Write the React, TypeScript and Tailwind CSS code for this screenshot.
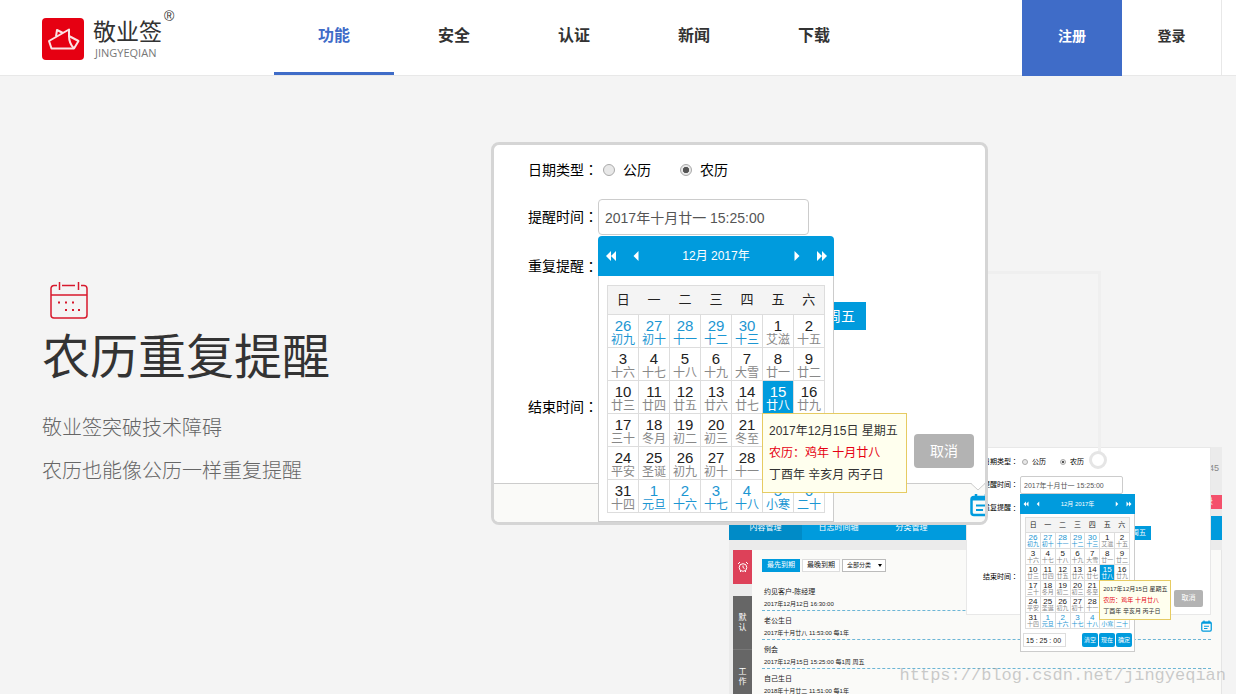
import { useId } from "react";
import clsx from "clsx";

type Size = "full" | "mini";

const weekdays = ["日", "一", "二", "三", "四", "五", "六"];

const weeks: [number, string][][] = [
  [[26, "初九"], [27, "初十"], [28, "十一"], [29, "十二"], [30, "十三"], [1, "艾滋"], [2, "十五"]],
  [[3, "十六"], [4, "十七"], [5, "十八"], [6, "十九"], [7, "大雪"], [8, "廿一"], [9, "廿二"]],
  [[10, "廿三"], [11, "廿四"], [12, "廿五"], [13, "廿六"], [14, "廿七"], [15, "廿八"], [16, "廿九"]],
  [[17, "三十"], [18, "冬月"], [19, "初二"], [20, "初三"], [21, "冬至"], [22, "初五"], [23, "初六"]],
  [[24, "平安"], [25, "圣诞"], [26, "初九"], [27, "初十"], [28, "十一"], [29, "十二"], [30, "十三"]],
  [[31, "十四"], [1, "元旦"], [2, "十六"], [3, "十七"], [4, "十八"], [5, "小寒"], [6, "二十"]],
];

const navItems = ["功能", "安全", "认证", "新闻", "下载"];

const reminders = [
  ["约见客户-陈经理", "2017年12月12日 16:30:00"],
  ["老公生日", "2017年十月廿八 11:53:00 每1年"],
  ["例会", "2017年12月15日 15:25:00 每1周 周五"],
  ["自己生日", "2018年十月廿二 11:51:00 每1年"],
];

const calendarStyles = {
  full: {
    box: "mt-px w-[236px]",
    head: "h-10 text-xs rounded-t-sm",
    arrow: "w-[25px]",
    icon: "size-3",
    body: "px-2 pt-[9px] pb-2",
    th: "h-[29px] w-[31px] text-[13px]",
    td: "h-[33px] w-[31px] pt-1",
    day: "text-[15px] leading-[14px]",
    lunar: "text-xs leading-[14px]",
    tip: "w-[145px] h-20 px-1.5 py-1.5 text-xs leading-[22px]",
  },
  mini: {
    box: "w-[115px]",
    head: "h-5 text-[6px]",
    arrow: "w-3",
    icon: "size-1.5",
    body: "px-1 pt-[3px] pb-1",
    th: "h-[15px] w-[15px] text-[7px]",
    td: "h-4 w-[15px] pt-px",
    day: "text-[8px] leading-[7px]",
    lunar: "text-[6px] leading-[7px]",
    tip: "w-[72px] h-10 px-[3px] py-[3px] text-[6px] leading-[11px]",
  },
};

const formStyles = {
  full: {
    text: "text-sm",
    row1: "h-[50px] pl-[34px]",
    row2: "mt-1 h-9 pl-[34px]",
    row3: "h-[62px] pl-[34px]",
    row4: "mt-[5px] pl-[322px]",
    row5: "h-[153px] pl-[34px]",
    label: "w-[70px]",
    radio: "size-3",
    choices: "pl-[5px] gap-[29px]",
    choice: "gap-2",
    input: "h-9 w-[211px] rounded px-1.5 text-sm",
    weekday: "h-7 w-[50px] text-sm",
    cancel: "mb-[15px] mr-[11px] h-[34px] w-[60px] rounded-sm text-sm",
  },
  mini: {
    text: "text-[7px]",
    row1: "h-7 pl-4",
    row2: "h-[18px] pl-4",
    row3: "h-7 pl-4",
    row4: "mt-1 pl-[160px]",
    row5: "h-[74px] pl-4",
    label: "w-[37px]",
    radio: "size-1.5",
    choices: "pl-0.5 gap-3.5",
    choice: "gap-1",
    input: "h-[18px] w-[103px] rounded-xs px-[3px] text-[7px]",
    weekday: "h-3.5 w-6 text-[7px]",
    cancel: "mb-[7px] mr-[7px] h-[17px] w-[29px] rounded-xs text-[7px]",
  },
};

function Arrow({ double = false, flip = false, className }: { double?: boolean; flip?: boolean; className: string }) {
  return (
    <svg viewBox="0 0 12 12" fill="currentColor" className={clsx(className, flip && "rotate-180")} aria-hidden="true">
      {double ? <path d="M6 1v10L1 6zM11 1v10L6 6z" /> : <path d="M8.500 1v10l-5-5z" />}
    </svg>
  );
}

function NoteIcon({ className }: { className: string }) {
  return (
    <svg viewBox="0 0 22 24" fill="none" stroke="currentColor" strokeWidth="2.500" className={className} aria-hidden="true">
      <rect x="1.500" y="4" width="19" height="18" rx="2.500" />
      <path d="M2 5.500h18" strokeWidth="4" />
      <path d="M6 1v4M16 1v4" />
      <path d="M6 12.500h10M6 17h7" strokeWidth="2" />
    </svg>
  );
}

// the TC face centres the full-width colon in its box
function Colon() {
  return <span className="font-['Noto_Sans_CJK_TC',sans-serif] leading-none">：</span>;
}

function DayTip({ className }: { className: string }) {
  return (
    <div
      className={clsx(
        "absolute top-full -left-px z-10 border border-[#e6cb62] bg-[#ffffee] text-left whitespace-nowrap text-[#333]",
        className,
      )}
    >
      <p>2017年12月15日 星期五</p>
      <p className="text-[#e60012]">农历：鸡年 十月廿八</p>
      <p>丁酉年 辛亥月 丙子日</p>
    </div>
  );
}

function Calendar({ size }: { size: Size }) {
  const s = calendarStyles[size];

  return (
    <div className={clsx("absolute top-full left-0 z-10 bg-white", s.box)}>
      <div className={clsx("flex items-center bg-[#009bdd] text-white", s.head)}>
        <button type="button" aria-label="上一年" className={clsx("flex justify-center", s.arrow)}>
          <Arrow double className={s.icon} />
        </button>
        <button type="button" aria-label="上个月" className={clsx("flex justify-center", s.arrow)}>
          <Arrow className={s.icon} />
        </button>
        <span className="flex-1 text-center">12月 2017年</span>
        <button type="button" aria-label="下个月" className={clsx("flex justify-center", s.arrow)}>
          <Arrow flip className={s.icon} />
        </button>
        <button type="button" aria-label="下一年" className={clsx("flex justify-center", s.arrow)}>
          <Arrow double flip className={s.icon} />
        </button>
      </div>
      <div className={clsx("border border-t-0 border-[#ccc]", s.body)}>
        <table className="table-fixed border-collapse text-center">
          <thead>
            <tr className="bg-[#f4f4f4]">
              {weekdays.map((day, i) => (
                <th
                  key={day}
                  className={clsx("border-y border-[#ddd] p-0 font-normal text-[#222]", i === 0 && "border-l", i === 6 && "border-r", s.th)}
                >
                  {day}
                </th>
              ))}
            </tr>
          </thead>
          <tbody>
            {weeks.map((week, w) => (
              <tr key={w}>
                {week.map(([day, lunar], d) => {
                  const outside = (w === 0 && day > 20) || (w === 5 && day < 10);
                  const selected = w === 2 && day === 15;
                  return (
                    <td
                      key={d}
                      className={clsx(
                        "relative border border-[#ddd] p-0 align-top",
                        s.td,
                        selected && "bg-[#009bdd] text-white",
                        !selected && (outside ? "text-[#1c96d2]" : "text-[#222]"),
                      )}
                    >
                      <div className={s.day}>{day}</div>
                      <div className={clsx(s.lunar, !selected && !outside && "text-[#888]")}>{lunar}</div>
                      {selected && <DayTip className={s.tip} />}
                    </td>
                  );
                })}
              </tr>
            ))}
          </tbody>
        </table>
        {size === "mini" && (
          <div className="-mx-0.5 mt-1 flex items-center justify-between">
            <input
              aria-label="时间"
              readOnly
              defaultValue="15 : 25 : 00"
              className="h-3.5 w-[43px] border border-[#ddd] px-0.5 text-[7px] text-[#222]"
            />
            <div className="flex gap-px text-[6px] text-white">
              {["清空", "现在", "确定"].map((action) => (
                <button key={action} type="button" className="h-3.5 w-4 rounded-xs bg-[#009bdd]">
                  {action}
                </button>
              ))}
            </div>
          </div>
        )}
      </div>
    </div>
  );
}

function ReminderForm({ size }: { size: Size }) {
  const s = formStyles[size];
  const id = useId();

  return (
    <form className={clsx("text-black", s.text)}>
      <div className={clsx("flex items-center", s.row1)}>
        <span className={clsx("whitespace-nowrap", s.label)}>
          日期类型
          <Colon />
        </span>
        <div className={clsx("flex", s.choices)}>
          {["公历", "农历"].map((type) => (
            <label key={type} className={clsx("flex items-center", s.choice)}>
              <input
                type="radio"
                name={`${id}-type`}
                defaultChecked={type === "农历"}
                className={clsx(
                  "appearance-none rounded-full border border-[#aaa] bg-[#e8e8e8] checked:bg-[radial-gradient(circle,#555_40%,#e8e8e8_50%)]",
                  s.radio,
                )}
              />
              {type}
            </label>
          ))}
        </div>
      </div>
      <div className={clsx("flex items-center", s.row2)}>
        <label htmlFor={`${id}-time`} className={clsx("whitespace-nowrap", s.label)}>
          提醒时间
          <Colon />
        </label>
        <div className="relative">
          <input
            id={`${id}-time`}
            readOnly
            defaultValue="2017年十月廿一 15:25:00"
            className={clsx("block border border-[#ccc] bg-white text-[#555]", s.input)}
          />
          <Calendar size={size} />
        </div>
      </div>
      <div className={clsx("flex items-center", s.row3)}>
        重复提醒
        <Colon />
      </div>
      <div className={clsx("flex", s.row4)}>
        <button type="button" className={clsx("bg-[#009bdd] text-white", s.weekday)}>
          周五
        </button>
      </div>
      <div className={clsx("flex items-center justify-between", s.row5)}>
        <span>
          结束时间
          <Colon />
        </span>
        <button type="button" className={clsx("self-end bg-[#b3b3b3] text-white", s.cancel)}>
          取消
        </button>
      </div>
    </form>
  );
}

function Header() {
  return (
    <header className="flex h-[76px] shrink-0 border-b border-[#e8e8e8] bg-white">
      <a href="#home" className="flex w-[274px] shrink-0 pt-[18px] pl-[42px]">
        <svg viewBox="0 0 42 42" className="size-[42px]" aria-hidden="true">
          <rect width="42" height="42" rx="4" fill="#e60012" />
          <g fill="none" stroke="#fbe3e4" strokeWidth="2" strokeLinejoin="round">
            <path d="M27 11.500 7 23l2.500 7.500H32L36.500 23 27 18z" />
            <path d="M27 11.500V18c0 5 1.500 9 5 12.500M14 18.500l1-6.500 6 3" />
          </g>
        </svg>
        <span className="ml-[9px] flex flex-col text-[#333]">
          <span className="text-[23px] leading-[28px]">敬业签</span>
          <span className="pl-0.5 font-['Open_Sans'] text-[11px] leading-[14px] text-[#777]">JINGYEQIAN</span>
        </span>
        <span className="-mt-2.5 ml-0.5 text-sm leading-4 text-[#333]">®</span>
      </a>
      <nav className="flex text-base font-bold text-[#333]">
        {navItems.map((item, i) => (
          <a
            key={item}
            href={`#nav-${i}`}
            className={clsx(
              "flex w-[120px] items-center justify-center border-b-[3px]",
              i === 0 ? "border-[#3f6cc8] text-[#3f6cc8]" : "border-transparent",
            )}
          >
            {item}
          </a>
        ))}
      </nav>
      <div className="mr-3.5 ml-auto flex text-sm font-bold">
        <a href="#register" className="-mb-px flex w-[100px] items-center justify-center bg-[#3f6cc8] pb-1 text-white">
          注册
        </a>
        <a href="#login" className="flex w-[100px] items-center justify-center border-r border-[#e8e8e8] pb-[3px] text-[#333]">
          登录
        </a>
      </div>
    </header>
  );
}

function AppWindow() {
  return (
    <div className="relative mt-[371px] mr-3.5 ml-[238px] h-full bg-[#ebebeb]">
      <div className="flex h-[69px] flex-col items-end justify-between pt-4 pb-[7px]">
        <span className="pr-[3px] text-[9px] leading-[11px] text-[#888]">45</span>
        <button type="button" className="h-3.5 w-[34px] bg-[#f4516c] text-[8px] leading-3 text-white">
          登录
        </button>
      </div>
      <nav className="flex h-6 bg-[#009bdd] text-[8px] text-white">
        {["内容管理", "日志时间轴", "分类管理"].map((tab, i) => (
          <a
            key={tab}
            href={`#tab-${i}`}
            className={clsx("flex w-[73px] items-center justify-center", i === 0 && "bg-[#008bc7]")}
          >
            {tab}
          </a>
        ))}
      </nav>
      <div className="mt-2.5 flex h-full border-r border-[#e5e5e5] bg-[#fafaf8]">
        <aside className="w-[23px] shrink-0 bg-[#ebebeb] pl-1 text-[8px] text-white">
          <div className="flex h-[34px] items-center justify-center bg-[#dd4159]">
            <svg viewBox="0 0 12 12" fill="none" stroke="currentColor" className="size-3" aria-hidden="true">
              <circle cx="6" cy="6.500" r="3.800" />
              <path d="M6 4.500v2l1.500 1M1 3l2-2M11 3 9 1M3 11l1-1M9 11l-1-1" />
            </svg>
          </div>
          <div className="mt-3 bg-[#666] leading-[10px]">
            <div className="flex h-[54px] items-center justify-center border-b border-[#777] px-1.5 text-center">默认</div>
            <div className="flex h-[54px] items-center justify-center px-1.5 text-center">工作</div>
          </div>
        </aside>
        <div className="flex-1 pt-[9px] pr-2.5 pl-2.5 text-[7px] text-[#222]">
          <div className="flex gap-0.5">
            <button type="button" className="h-[13px] w-[38px] bg-[#009bdd] text-white">
              最先到期
            </button>
            <button type="button" className="h-[13px] w-[38px] border border-[#ddd] bg-white">
              最晚到期
            </button>
            <div className="relative">
              <select aria-label="分类" className="block h-[13px] w-11 appearance-none border border-[#bbb] bg-white pl-1 text-[6px]">
                <option>全部分类</option>
              </select>
              <span className="pointer-events-none absolute top-[5px] right-1 border-x-2 border-t-3 border-x-transparent border-t-black" />
            </div>
          </div>
          <ul className="mt-2.5">
            {reminders.map(([title, time]) => (
              <li key={title} className="h-[29px] border-b border-dashed border-[#6db6d6] pt-[3px] pl-0.5">
                <p className="leading-[13px]">{title}</p>
                <p className="text-[6px] leading-[13px]">{time}</p>
              </li>
            ))}
          </ul>
        </div>
      </div>
      <div className="absolute top-0 left-[237px] w-[245px] border border-[#e8e8e8] bg-white">
        <ReminderForm size="mini" />
      </div>
      <NoteIcon className="absolute top-[173px] left-[472px] h-3 w-[11px] text-[#009bdd]" />
    </div>
  );
}

export default function App() {
  return (
    <div className="flex h-screen flex-col overflow-hidden bg-[#f4f4f4] font-['Liberation_Sans','Noto_Sans_CJK_SC',sans-serif]">
      <Header />
      <main className="relative flex flex-1 overflow-hidden">
        <section className="w-[491px] shrink-0 pt-[205px] pl-[42px]">
          <svg viewBox="0 0 38 38" fill="none" stroke="#d7192d" strokeWidth="1.500" className="ml-2 size-[38px]" aria-hidden="true">
            <path d="M7 4.500H4A3 3 0 0 0 1 7.500V34a3 3 0 0 0 3 3h30a3 3 0 0 0 3-3V7.500a3 3 0 0 0-3-3h-3M12 4.500h13M1 14h36M9.500 1v8M28.500 1v8" />
            <path d="M8 21.500h2M15 21.500h2M22 21.500h2M15 29h2M22 29h2M28 29h2" strokeWidth="2" />
          </svg>
          <h1 className="mt-[11px] text-5xl leading-[56px] text-[#333]">农历重复提醒</h1>
          <div className="mt-[21px] text-xl leading-[43px] font-light text-[#666]">
            <p>敬业签突破技术障碍</p>
            <p>农历也能像公历一样重复提醒</p>
          </div>
        </section>
        <section className="relative flex-1">
          <AppWindow />
          {/* leader line from the enlarged panel to the spot in the window */}
          <div className="absolute top-[195px] left-[497px] h-[181px] w-[113px] border-t-3 border-r-3 border-[#efefef]" />
          <div className="absolute top-[375px] left-[598px] size-[18px] rounded-full border-3 border-[#e5e5e5] bg-white" />
          <div className="absolute top-[66px] left-0 w-[497px] overflow-hidden rounded-lg border-3 border-[#d5d5d5] bg-white">
            <ReminderForm size="full" />
            <div className="relative flex h-[39px] justify-end border-t border-[#ccc] bg-[#fafaf8] pt-[9px]">
              <svg viewBox="0 0 14 8" className="absolute -top-px right-0 h-2 w-3.5" aria-hidden="true">
                <path d="M0 0h14L7 7z" fill="#fff" />
                <path d="m0 .5 7 6.500 7-6.500" fill="none" stroke="#ccc" />
              </svg>
              <NoteIcon className="-mr-[7px] h-6 w-[22px] shrink-0 text-[#009bdd]" />
            </div>
          </div>
        </section>
        <p className="pointer-events-none absolute right-2.5 bottom-1.5 font-['Liberation_Mono',monospace] text-[17px] text-[#999]/50">
          https://blog.csdn.net/jingyeqian
        </p>
      </main>
    </div>
  );
}
